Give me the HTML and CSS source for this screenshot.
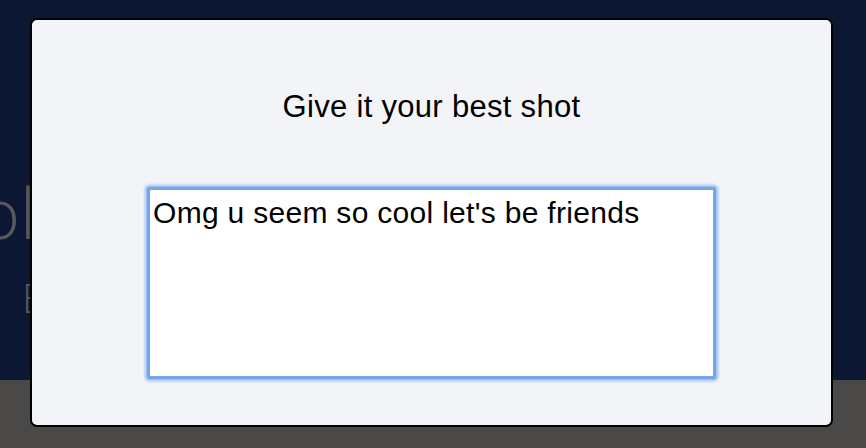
FILE: index.html
```html
<!DOCTYPE html>
<html>
<head>
<meta charset="utf-8">
<link rel="stylesheet" href="styles.css">
</head>
<body>
<div class="page">
  <section class="hero">
    <div class="hero-title">ol</div>
    <div class="hero-sub">E</div>
  </section>
  <section class="footer"></section>
</div>
<div class="overlay">
  <div class="modal">
    <h2 class="modal-title">Give it your best shot</h2>
    <div class="field">
      <textarea class="answer">Omg u seem so cool let's be friends</textarea>
    </div>
  </div>
</div>
</body>
</html>
```

FILE: styles.css
```css
html, body {
  margin: 0;
  padding: 0;
  width: 866px;
  height: 448px;
  overflow: hidden;
  font-family: "Liberation Sans", Arial, sans-serif;
}
.page {
  display: flex;
  flex-direction: column;
  height: 448px;
}
.hero {
  height: 380px;
  background: #0c1833;
  display: flex;
  flex-direction: column;
  padding-top: 172px;
  box-sizing: border-box;
}
.hero-title {
  font-family: "Open Sans", sans-serif;
  font-weight: 300;
  font-size: 70px;
  line-height: 80px;
  color: #58595e;
  margin-left: -21px;
}
.hero-sub {
  font-family: "Open Sans", sans-serif;
  font-weight: 300;
  font-size: 40px;
  line-height: 48px;
  color: #58595e;
  margin-top: 22px;
  margin-left: 22px;
}
.footer {
  flex: 1;
  background: #4b4947;
}
.overlay {
  position: absolute;
  left: 30px;
  top: 18px;
}
.modal {
  width: 803px;
  height: 409px;
  box-sizing: border-box;
  border: 2px solid #000;
  border-radius: 7px;
  background: #f3f4f8;
  display: flex;
  flex-direction: column;
  align-items: center;
  padding-top: 70px;
}
.modal-title {
  margin: 0;
  font-weight: normal;
  font-size: 31px;
  line-height: 34px;
  letter-spacing: 0.3px;
  color: #000;
}
.field {
  margin-top: 63px;
}
.answer {
  display: block;
  width: 569px;
  height: 192px;
  box-sizing: border-box;
  margin: 0;
  resize: none;
  border: 3px solid #76a5ec;
  outline: none;
  box-shadow: 0 0 0 1px #9dc0f2, 0 0 2px 3px #bcd4f6;
  border-radius: 3px;
  background: #fff;
  padding: 6px 3px 4px;
  font-family: "Liberation Sans", Arial, sans-serif;
  font-size: 30px;
  line-height: 34px;
  letter-spacing: 0.3px;
  color: #000;
}
```
